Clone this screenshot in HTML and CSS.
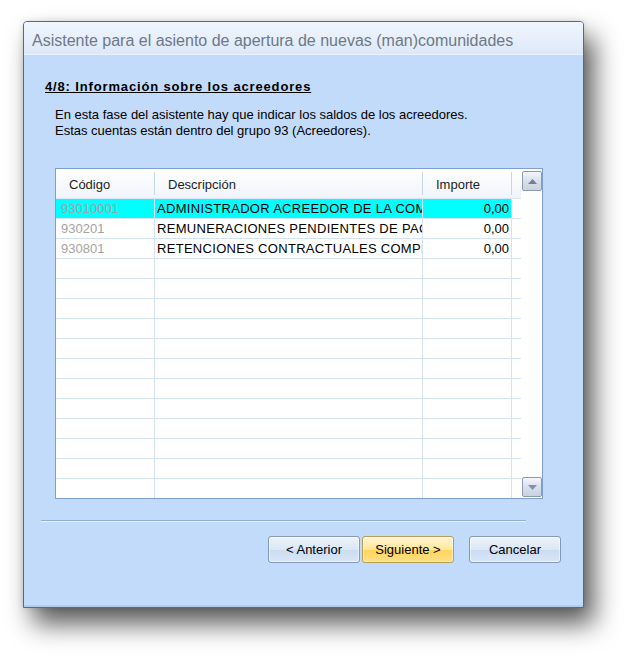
FILE: index.html
```html
<!DOCTYPE html>
<html lang="es">
<head>
<meta charset="UTF-8" />
<title>Asistente de apertura</title>
<link rel="stylesheet" href="styles.css">
</head>
<body>

<div class="page">
  <div class="dialog">
    <div class="titlebar">Asistente para el asiento de apertura de nuevas (man)comunidades</div>

    <div class="content">
      <h3 class="step">4/8: Información sobre los acreedores</h3>
      <p class="intro">En esta fase del asistente hay que indicar los saldos de los acreedores.<br>Estas cuentas están dentro del grupo 93 (Acreedores).</p>

      <div class="grid">
        <div class="grid-body">
          <div class="row head">
            <div class="cell">Código</div>
            <div class="cell">Descripción</div>
            <div class="cell">Importe</div>
            <div class="cell"></div>
          </div>
          <div class="row selected">
            <div class="cell code">93010001</div>
            <div class="cell desc">ADMINISTRADOR ACREEDOR DE LA COMUNIDAD</div>
            <div class="cell num">0,00</div>
            <div class="cell"></div>
          </div>
          <div class="row">
            <div class="cell code">930201</div>
            <div class="cell desc">REMUNERACIONES PENDIENTES DE PAGO</div>
            <div class="cell num">0,00</div>
            <div class="cell"></div>
          </div>
          <div class="row">
            <div class="cell code">930801</div>
            <div class="cell desc">RETENCIONES CONTRACTUALES COMPROMETIDAS</div>
            <div class="cell num">0,00</div>
            <div class="cell"></div>
          </div>
          <div class="row"><div class="cell"></div><div class="cell"></div><div class="cell"></div><div class="cell"></div></div>
          <div class="row"><div class="cell"></div><div class="cell"></div><div class="cell"></div><div class="cell"></div></div>
          <div class="row"><div class="cell"></div><div class="cell"></div><div class="cell"></div><div class="cell"></div></div>
          <div class="row"><div class="cell"></div><div class="cell"></div><div class="cell"></div><div class="cell"></div></div>
          <div class="row"><div class="cell"></div><div class="cell"></div><div class="cell"></div><div class="cell"></div></div>
          <div class="row"><div class="cell"></div><div class="cell"></div><div class="cell"></div><div class="cell"></div></div>
          <div class="row"><div class="cell"></div><div class="cell"></div><div class="cell"></div><div class="cell"></div></div>
          <div class="row"><div class="cell"></div><div class="cell"></div><div class="cell"></div><div class="cell"></div></div>
          <div class="row"><div class="cell"></div><div class="cell"></div><div class="cell"></div><div class="cell"></div></div>
          <div class="row"><div class="cell"></div><div class="cell"></div><div class="cell"></div><div class="cell"></div></div>
          <div class="row"><div class="cell"></div><div class="cell"></div><div class="cell"></div><div class="cell"></div></div>
          <div class="row"><div class="cell"></div><div class="cell"></div><div class="cell"></div><div class="cell"></div></div>
        </div>
        <div class="scrollbar">
          <span class="scroll-btn">
            <svg width="9" height="5" viewBox="0 0 9 5"><path d="M0 5 L4.5 0 L9 5 Z" fill="#6f7f98"/></svg>
          </span>
          <span class="scroll-btn">
            <svg width="9" height="5" viewBox="0 0 9 5"><path d="M0 0 L4.5 5 L9 0 Z" fill="#8090b8"/></svg>
          </span>
        </div>
      </div>

      <div class="separator"></div>

      <div class="actions">
        <div class="nav">
          <button>&lt; Anterior</button>
          <button class="primary">Siguiente &gt;</button>
        </div>
        <button>Cancelar</button>
      </div>
    </div>
  </div>
</div>

</body>
</html>
```

FILE: styles.css
```css
body {
  margin: 0;
  background-color: #fff;
  font-family: "Liberation Sans", Arial, sans-serif;
  color: #000;
}
.page {
  padding: 21px 0 53px 23px;
}
.dialog {
  width: 561px;
  height: 587px;
  box-sizing: border-box;
  border: 1px solid #4a6a9c;
  border-radius: 4px 4px 0 0;
  background-color: #c3dbfa;
  box-shadow: 10px 16px 26px rgba(0,0,0,0.65), 0 0 6px rgba(0,0,0,0.12);
  display: flex;
  flex-direction: column;
}
.titlebar {
  height: 33px;
  box-sizing: border-box;
  padding: 10px 0 0 8px;
  font-size: 16px;
  line-height: 18px;
  color: #6e7886;
  background: linear-gradient(#f1f6fd, #dce9f9);
  border-bottom: 1px solid #e9f1fc;
  border-radius: 3px 3px 0 0;
  white-space: nowrap;
}
.content {
  flex: 1;
  padding: 24px 0 0 21px;
  border-bottom: 2px solid #b4cdee;
}
.step {
  margin: 0;
  font-size: 13px;
  line-height: 16px;
  font-weight: bold;
  letter-spacing: 0.85px;
  text-decoration: underline;
}
.intro {
  margin: 12px 0 0 10px;
  font-size: 13px;
  line-height: 16px;
}

/* rejilla de cuentas */
.grid {
  margin: 29px 0 0 10px;
  width: 488px;
  height: 331px;
  box-sizing: border-box;
  border: 1px solid #7d9fd3;
  background-color: #fff;
  display: flex;
  overflow: hidden;
}
.grid-body {
  width: 465px;
  overflow: hidden;
}
.row {
  display: grid;
  grid-template-columns: 99px 268px 89px 9px;
  height: 20px;
  box-sizing: border-box;
  border-bottom: 1px solid #d3e2f7;
  font-size: 13px;
}
.cell {
  border-right: 1px solid #d3e2f7;
  padding: 0 2px;
  line-height: 19px;
  white-space: nowrap;
  overflow: hidden;
}
.cell:last-child {
  border-right: none;
}
.row.head {
  height: 30px;
  background: linear-gradient(#ffffff, #f0f4fb);
  border-bottom: 1px solid #d9e3f2;
}
.row.head .cell {
  border-right: none;
  line-height: 31px;
  padding-left: 13px;
  color: #1d1d1d;
  background: linear-gradient(#c6d6ee, #c6d6ee) right 3px / 1px 23px no-repeat;
}
.row.head .cell:last-child {
  background: none;
}
.row.selected .cell {
  background-color: #00ffff;
}
.row.selected .cell:last-child {
  background-color: #fff;
}
.cell.code {
  color: #a3a3a3;
  padding-left: 5px;
}
.cell.desc {
  letter-spacing: 0.3px;
}
.cell.num {
  text-align: right;
}
.scrollbar {
  flex: 1;
  display: flex;
  flex-direction: column;
  justify-content: space-between;
  padding: 2px 0 1px 1px;
}
.scroll-btn {
  width: 20px;
  height: 20px;
  box-sizing: border-box;
  border: 1px solid #8d9bb2;
  border-radius: 2px;
  background: linear-gradient(#f4f6fa, #d9e0ea 50%, #c9d2df);
  display: flex;
  align-items: center;
  justify-content: center;
}

.separator {
  margin: 21px 0 0 -4px;
  width: 485px;
  height: 1px;
  background-color: #91aed6;
  border-bottom: 1px solid #e6effb;
}
.actions {
  margin: 14px 0 0 223px;
  display: flex;
  gap: 15px;
}
.nav {
  display: flex;
  gap: 2px;
}
button {
  width: 92px;
  height: 27px;
  padding: 0;
  font-family: "Liberation Sans", Arial, sans-serif;
  font-size: 13px;
  color: #000;
  border: 1px solid #8299ba;
  border-radius: 3px;
  background: linear-gradient(#edf3fb, #dbe7f6 50%, #cbdcf1 51%, #d9e6f6);
  box-shadow: inset 0 0 0 1px rgba(255,255,255,0.5);
}
button.primary {
  border-color: #b99c56;
  background: linear-gradient(#fff6d6, #ffe699 50%, #ffd456 51%, #ffe08a);
}
```
